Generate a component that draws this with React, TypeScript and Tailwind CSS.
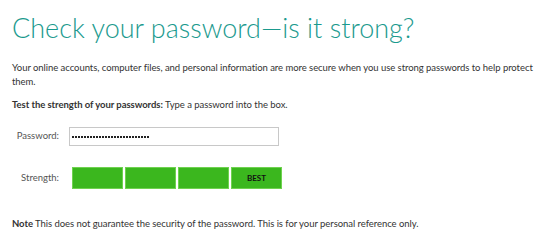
export default function App() {
  const dots = Array.from({ length: 26 })
  return (
    <div className="w-[550px] h-[244px] bg-white px-3 pt-[12px] text-[#333] font-['Lato',sans-serif] overflow-hidden">
      <h1 className="text-[27px] leading-[32px] font-light text-[#1b9a8e]">
        Check your password—is it strong?
      </h1>

      <p className="mt-[17px] text-[9.5px] leading-[14px] tracking-[-0.05px]">
        Your online accounts, computer files, and personal information are more secure when you use strong passwords to help protect them.
      </p>

      <p className="mt-[9px] text-[9.5px] leading-[14px] tracking-[-0.05px]">
        <span className="font-bold">Test the strength of your passwords:</span> Type a password into the box.
      </p>

      <div className="mt-[15px] flex items-center">
        <span className="w-[47px] text-right text-[9.5px] text-[#555]">Password:</span>
        <div className="ml-[10px] w-[210px] h-[19px] border border-[#c8c8c8] flex items-center px-[2px]">
          <div className="flex gap-[1px]">
            {dots.map((_, i) => (
              <span key={i} className="w-[2px] h-[2px] bg-[#222]" />
            ))}
          </div>
        </div>
      </div>

      <div className="mt-[21px] flex items-center">
        <span className="w-[47px] text-right text-[9.5px] text-[#555]">Strength:</span>
        <div className="ml-[13px] flex gap-[2px]">
          <div className="w-[51px] h-[22px] bg-[#3bb71e] border border-[#6fd24f]" />
          <div className="w-[51px] h-[22px] bg-[#3bb71e] border border-[#6fd24f]" />
          <div className="w-[51px] h-[22px] bg-[#3bb71e] border border-[#6fd24f]" />
          <div className="w-[51px] h-[22px] bg-[#3bb71e] border border-[#6fd24f] flex items-center justify-center text-[8px] font-bold text-[#111]">
            BEST
          </div>
        </div>
      </div>

      <p className="mt-[28px] text-[9.5px] leading-[14px] tracking-[-0.05px]">
        <span className="font-bold">Note</span> This does not guarantee the security of the password. This is for your personal reference only.
      </p>
    </div>
  )
}
